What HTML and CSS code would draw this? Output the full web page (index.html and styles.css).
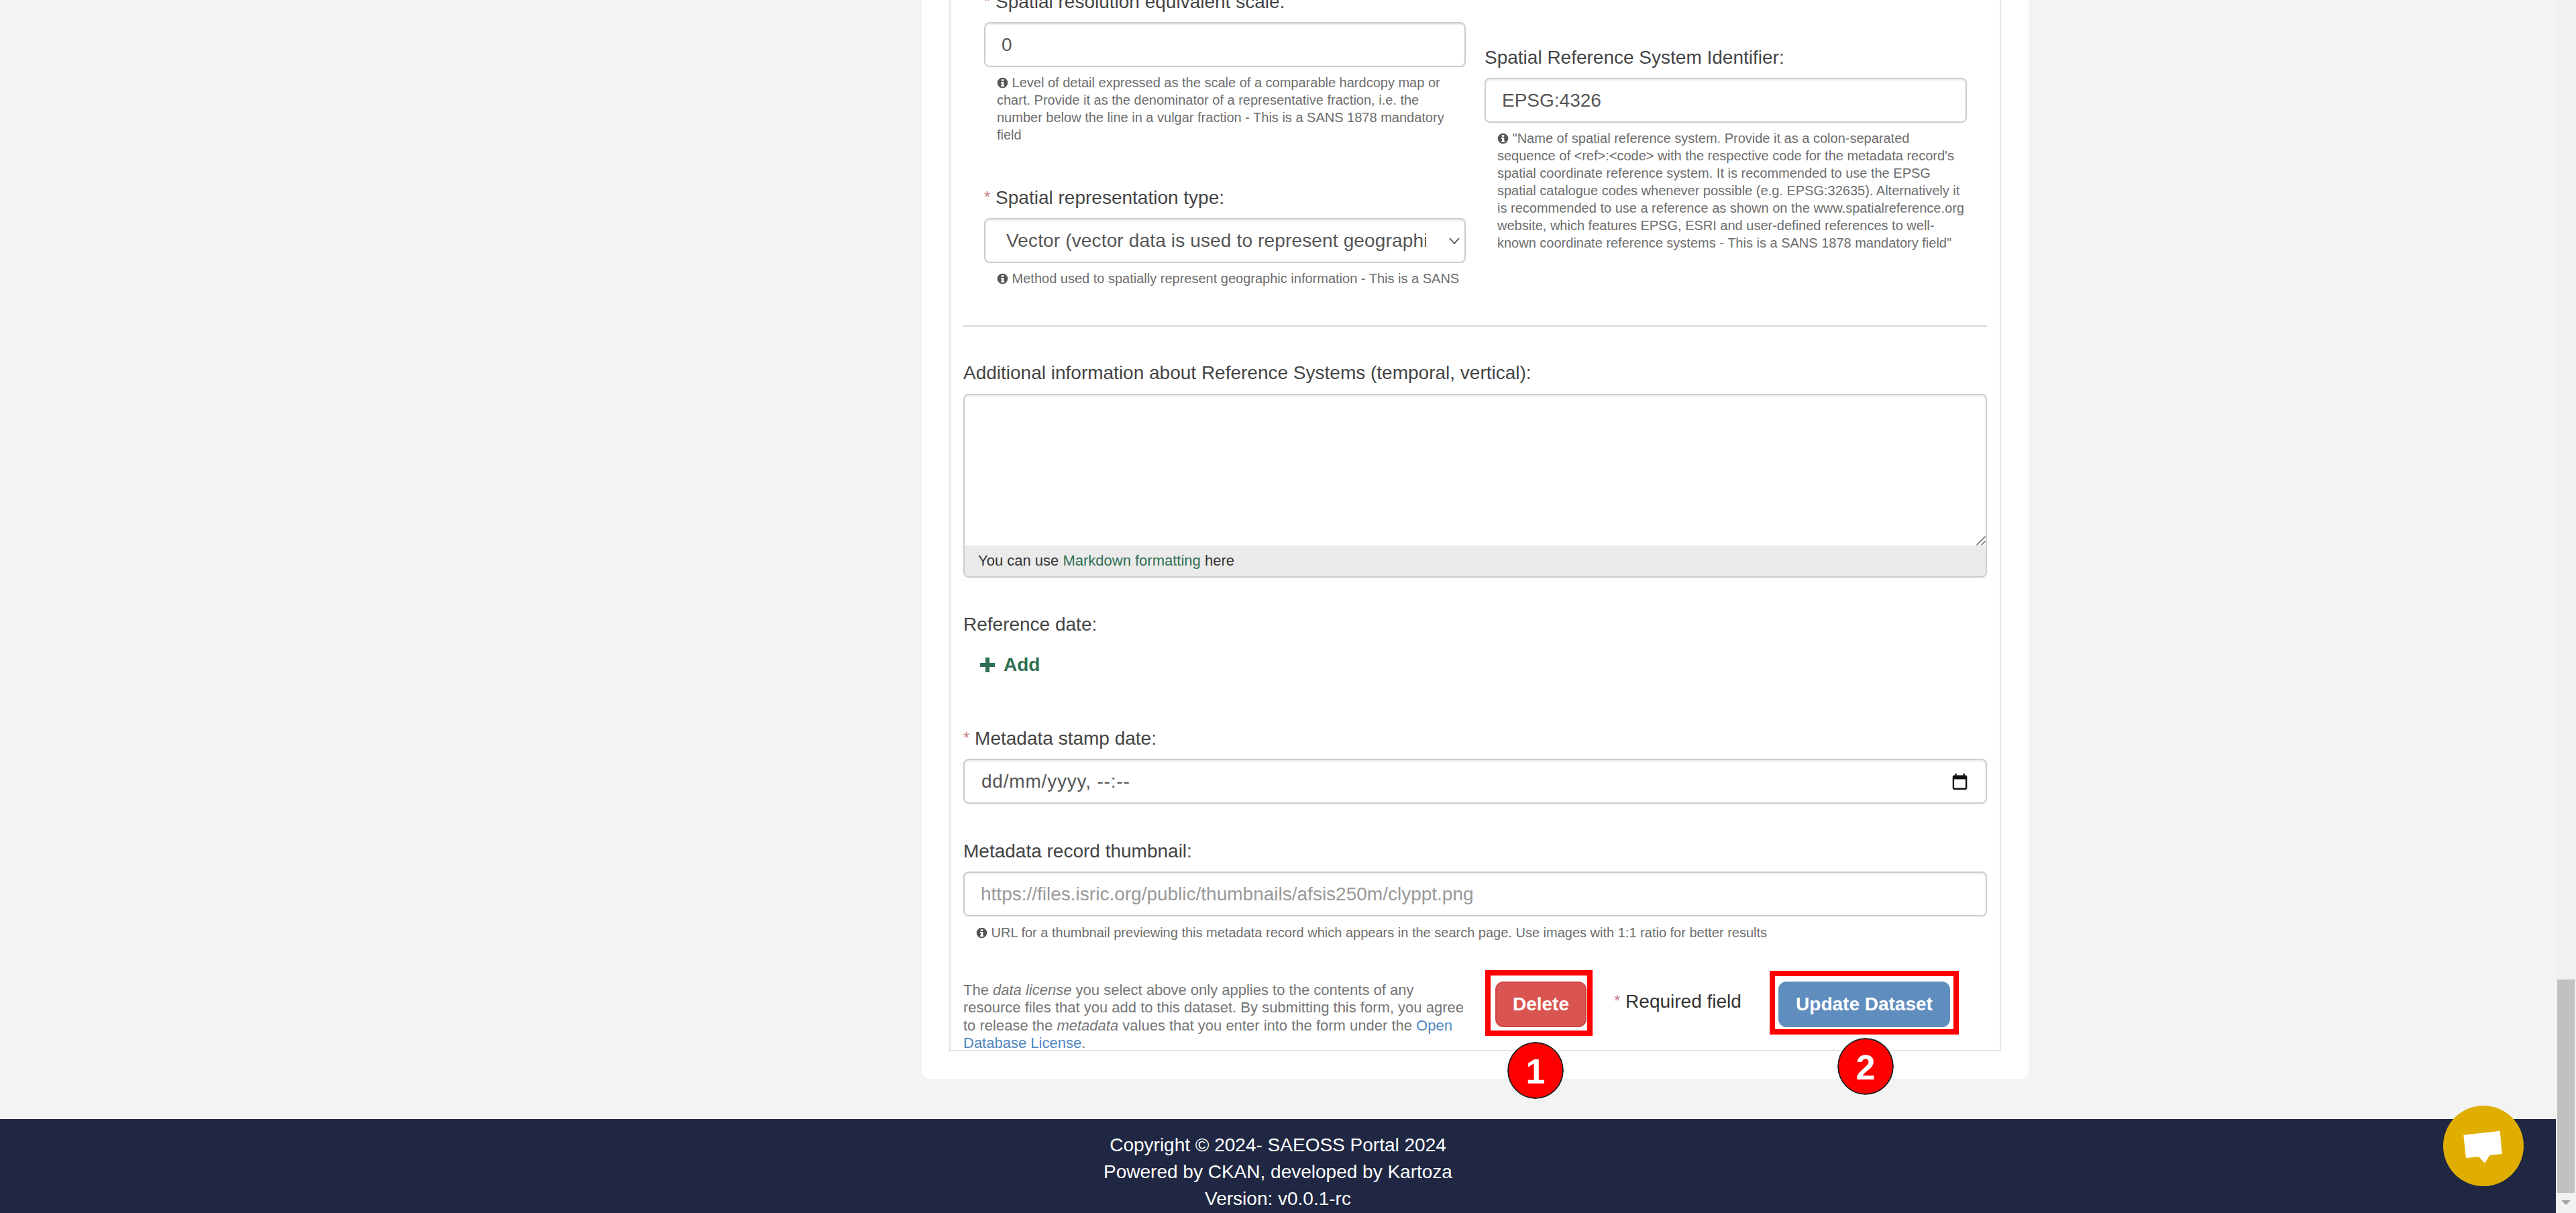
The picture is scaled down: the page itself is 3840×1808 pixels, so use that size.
FILE: index.html
```html
<!DOCTYPE html>
<html lang="en">
<head>
  <meta charset="UTF-8" />
  <meta name="viewport" content="width=device-width, initial-scale=1.0" />
  <title>Edit Dataset - SAEOSS Portal</title>
  <link rel="stylesheet" href="styles.css">
</head>
<body>
  <svg class="icon-defs" width="0" height="0">
    <symbol id="info" viewBox="0 0 24 24">
      <path fill-rule="evenodd" d="M12 1a11 11 0 1 0 0 22a11 11 0 0 0 0-22zM9.500 4.500h5v3.600h-5zM8.600 10h5.900v7.200h1.400v2.600H8.600v-2.600h1.200v-4.600H8.600z"/>
    </symbol>
  </svg>

  <div class="window">
    <div class="page">
      <main class="content">
        <div class="card">
          <form class="dataset-form">
            <div class="two-cols">
              <div class="col">
                <label class="field-label"><span class="req">*</span> Spatial resolution equivalent scale:</label>
                <input class="control" type="text" value="0" />
                <p class="help"><svg class="info"><use href="#info"/></svg> Level of detail expressed as the scale of a comparable hardcopy map or chart. Provide it as the denominator of a representative fraction, i.e. the number below the line in a vulgar fraction - This is a SANS 1878 mandatory field</p>

                <label class="field-label spaced"><span class="req">*</span> Spatial representation type:</label>
                <select class="control select-control">
                  <option>Vector (vector data is used to represent geographic data)</option>
                </select>
                <p class="help clipped"><svg class="info"><use href="#info"/></svg> Method used to spatially represent geographic information - This is a SANS 1878 mandatory field</p>
              </div>
              <div class="col col-right">
                <label class="field-label">Spatial Reference System Identifier:</label>
                <input class="control" type="text" value="EPSG:4326" />
                <p class="help"><svg class="info"><use href="#info"/></svg> "Name of spatial reference system. Provide it as a colon-separated sequence of &lt;ref&gt;:&lt;code&gt; with the respective code for the metadata record's spatial coordinate reference system. It is recommended to use the EPSG spatial catalogue codes whenever possible (e.g. EPSG:32635). Alternatively it is recommended to use a reference as shown on the www.spatialreference.org website, which features EPSG, ESRI and user-defined references to well-known coordinate reference systems - This is a SANS 1878 mandatory field"</p>
              </div>
            </div>

            <hr class="divider" />

            <label class="field-label">Additional information about Reference Systems (temporal, vertical):</label>
            <div class="markdown-box">
              <div class="markdown-area">
                <textarea class="markdown-input"></textarea>
                <svg class="resize-handle" width="14" height="14" viewBox="0 0 14 14"><path d="M0.500 13.500 13.500 0.500M7.500 13.500 13.500 7.500"/></svg>
              </div>
              <div class="markdown-note">You can use <a href="#">Markdown formatting</a> here</div>
            </div>

            <label class="field-label group-top">Reference date:</label>
            <a class="add-link" href="#">
              <svg width="24" height="24" viewBox="0 0 24 24"><path d="M9 1h6v8h8v6h-8v8H9v-8H1V9h8z"/></svg>
              Add
            </a>

            <label class="field-label stamp-top"><span class="req">*</span> Metadata stamp date:</label>
            <div class="control date-control">
              <span>dd/mm/yyyy, --:--</span>
              <svg width="23" height="24" viewBox="3 1 18 20"><path d="M19 3h-1V1h-2v2H8V1H6v2H5a2 2 0 0 0-2 2v14a2 2 0 0 0 2 2h14a2 2 0 0 0 2-2V5a2 2 0 0 0-2-2zm0 16H5V8h14z"/></svg>
            </div>

            <label class="field-label thumb-top">Metadata record thumbnail:</label>
            <input class="control" type="text" placeholder="https://files.isric.org/public/thumbnails/afsis250m/clyppt.png" />
            <p class="help thumb-help"><svg class="info"><use href="#info"/></svg> URL for a thumbnail previewing this metadata record which appears in the search page. Use images with 1:1 ratio for better results</p>

            <div class="form-actions">
              <p class="license-note">The <em>data license</em> you select above only applies to the contents of any resource files that you add to this dataset. By submitting this form, you agree to release the <em>metadata</em> values that you enter into the form under the <a href="#">Open Database License</a>.</p>
              <button class="btn btn-danger" type="button">Delete</button>
              <span class="required-note"><span class="req">*</span> Required field</span>
              <button class="btn btn-primary" type="button">Update Dataset</button>
            </div>
          </form>
        </div>
      </main>

      <footer class="site-footer">
        <div>Copyright © 2024- SAEOSS Portal 2024</div>
        <div>Powered by CKAN, developed by Kartoza</div>
        <div>Version: v0.0.1-rc</div>
      </footer>
    </div>

    <div class="scrollbar">
      <div class="scroll-track"><div class="scroll-thumb"></div></div>
      <div class="scroll-arrow"></div>
    </div>
  </div>

  <!-- annotations drawn over the screenshot -->
  <div class="mark mark-delete"></div>
  <div class="mark mark-update"></div>
  <div class="step step-1">1</div>
  <div class="step step-2">2</div>

  <button class="chat-btn" type="button" aria-label="Chat">
    <svg width="120" height="120" viewBox="0 0 120 120"><path d="M30.300 43.700 84.700 37.700 87.700 72 69.300 74 62 85.700 53 76 34 78z"/></svg>
  </button>
</body>
</html>
```

FILE: styles.css
```css
* {
  box-sizing: border-box;
}

html, body {
  margin: 0;
  height: 100%;
  overflow: hidden;
}

body {
  font-family: "Liberation Sans", Arial, sans-serif;
  font-size: 28px;
  line-height: 40px;
  color: #444;
  background: #f3f3f3;
}

.icon-defs {
  position: absolute;
}

.window {
  display: flex;
  height: 100vh;
}

.page {
  flex: 1;
  display: flex;
  flex-direction: column;
  min-width: 0;
}

.content {
  flex: 1;
  min-height: 0;
  padding-left: 1374px;
}

.card {
  width: 1650px;
  height: 1608px;
  padding: 0 41px;
  background: #fff;
  border-radius: 0 0 12px 12px;
}

.dataset-form {
  display: flow-root;
  height: 1567px;
  padding: 0 19px;
  border: 2px solid #e5e5e5;
  border-top: 0;
}

/* the page is scrolled, so the first label runs off the top */
.two-cols {
  display: grid;
  grid-template-columns: 718px 719px;
  gap: 28px;
  padding-left: 31px;
  margin-top: -18px;
}

.col-right {
  padding-top: 84px;
}

.field-label {
  display: block;
  margin-bottom: 10px;
}

.field-label.spaced {
  margin-top: 60px;
}

.req {
  color: #c6838b;
  font-size: 24px;
  vertical-align: 2px;
}

.control {
  display: block;
  width: 100%;
  height: 67px;
  padding: 0 24px;
  font-family: inherit;
  font-size: 28px;
  color: #555;
  background: #fff;
  border: 2px solid #ccc;
  border-radius: 8px;
  box-shadow: inset 0 2px 2px rgba(0, 0, 0, 0.075);
}

.control::placeholder {
  color: #999;
}

.select-control {
  appearance: none;
  padding: 0 57px 0 31px;
  letter-spacing: 0.15px;
  background-image: url("data:image/svg+xml,%3Csvg xmlns='http://www.w3.org/2000/svg' width='16' height='10' viewBox='0 0 16 10'%3E%3Cpath d='M1 1l7 8 7-8' fill='none' stroke='%23444' stroke-width='1.600'/%3E%3C/svg%3E");
  background-repeat: no-repeat;
  background-position: right 7px center;
}

.help {
  margin: 10px 0 0 19px;
  font-size: 20px;
  line-height: 26px;
  color: #6d6d6d;
}

.help.clipped {
  height: 26px;
  overflow: hidden;
}

.info {
  width: 17px;
  height: 17px;
  vertical-align: -2px;
  fill: #555;
}

.divider {
  height: 2px;
  margin: 57px 0 49px;
  border: 0;
  background: #d5d9dd;
}

.divider + .field-label {
  margin-bottom: 11px;
}

.markdown-box {
  height: 274px;
  border: 2px solid #ccc;
  border-radius: 8px;
  box-shadow: inset 0 2px 2px rgba(0, 0, 0, 0.075);
  overflow: hidden;
}

.markdown-area {
  position: relative;
  height: 224px;
}

.markdown-input {
  display: block;
  width: 100%;
  height: 100%;
  padding: 12px 24px;
  border: 0;
  background: transparent;
  outline: none;
  resize: none;
}

.resize-handle {
  position: absolute;
  right: 0;
  bottom: 0;
  stroke: #666;
  stroke-width: 1.500;
}

.markdown-note {
  height: 46px;
  padding-left: 20px;
  font-size: 22px;
  line-height: 46px;
  color: #333;
  background: #ebebeb;
}

.markdown-note a {
  color: #2f6f4f;
  text-decoration: none;
}

.group-top {
  margin-top: 50px;
}

.add-link {
  display: flex;
  align-items: center;
  gap: 12px;
  height: 40px;
  margin: 20px 0 0 24px;
  font-weight: bold;
  color: #2f6f4f;
  text-decoration: none;
}

.add-link svg {
  fill: #2f6f4f;
}

.stamp-top {
  margin-top: 69px;
}

.date-control {
  display: flex;
  align-items: center;
  justify-content: space-between;
  padding: 0 27px 0 25px;
  letter-spacing: 0.8px;
  color: #555;
}

.date-control svg {
  fill: #111;
}

.thumb-top {
  margin-top: 51px;
}

.thumb-help {
  margin: 11px 0 0 19px;
}

.form-actions {
  display: flex;
  align-items: flex-start;
  margin-top: 60px;
}

.license-note {
  width: 760px;
  margin: 0 33px 0 0;
  font-size: 22px;
  line-height: 26.4px;
  color: #757575;
}

.license-note a {
  color: #4f86c0;
  text-decoration: none;
}

.btn {
  height: 68px;
  padding: 0;
  font-family: inherit;
  font-size: 28px;
  font-weight: bold;
  color: #fff;
  border: 2px solid transparent;
  border-radius: 12px;
}

.btn-danger {
  width: 136px;
  background: #da5552;
  border-color: #d0433f;
}

.btn-primary {
  width: 256px;
  background: #5f8dbe;
  border-color: #5f8dbe;
}

.required-note {
  width: 286px;
  padding: 9px 0 0 41px;
  color: #333;
}

.site-footer {
  flex: none;
  height: 140px;
  padding-top: 19px;
  text-align: center;
  color: #fff;
  background: #1f2742;
}

.scrollbar {
  flex: none;
  width: 30px;
  display: flex;
  flex-direction: column;
  background: #f1f1f1;
}

.scroll-track {
  flex: 1;
  padding: 1460px 2px 0;
}

.scroll-thumb {
  height: 318px;
  background: #c1c1c1;
}

.scroll-arrow {
  flex: none;
  height: 30px;
  position: relative;
}

.scroll-arrow::after {
  content: "";
  position: absolute;
  left: 8px;
  top: 11px;
  border-left: 7px solid transparent;
  border-right: 7px solid transparent;
  border-top: 7px solid #a3a3a3;
}

.mark {
  position: absolute;
  border: 8px solid #f00;
}

.mark-delete {
  left: 2214px;
  top: 1446px;
  width: 160px;
  height: 98px;
}

.mark-update {
  left: 2638px;
  top: 1447px;
  width: 282px;
  height: 95px;
}

.step {
  position: absolute;
  width: 84px;
  height: 85px;
  font-size: 52px;
  font-weight: bold;
  line-height: 85px;
  text-align: center;
  color: #fff;
  background: #f00;
  border: 2px solid #222;
  border-radius: 50%;
  outline: 1px solid rgba(255, 255, 255, 0.7);
}

.step-1 {
  left: 2247px;
  top: 1553px;
}

.step-2 {
  left: 2739px;
  top: 1547px;
}

.chat-btn {
  position: absolute;
  left: 3642px;
  top: 1648px;
  width: 120px;
  height: 120px;
  padding: 0;
  border: 0;
  border-radius: 50%;
  background: #e0ae00;
}

.chat-btn svg {
  display: block;
  fill: #fff;
}
```
